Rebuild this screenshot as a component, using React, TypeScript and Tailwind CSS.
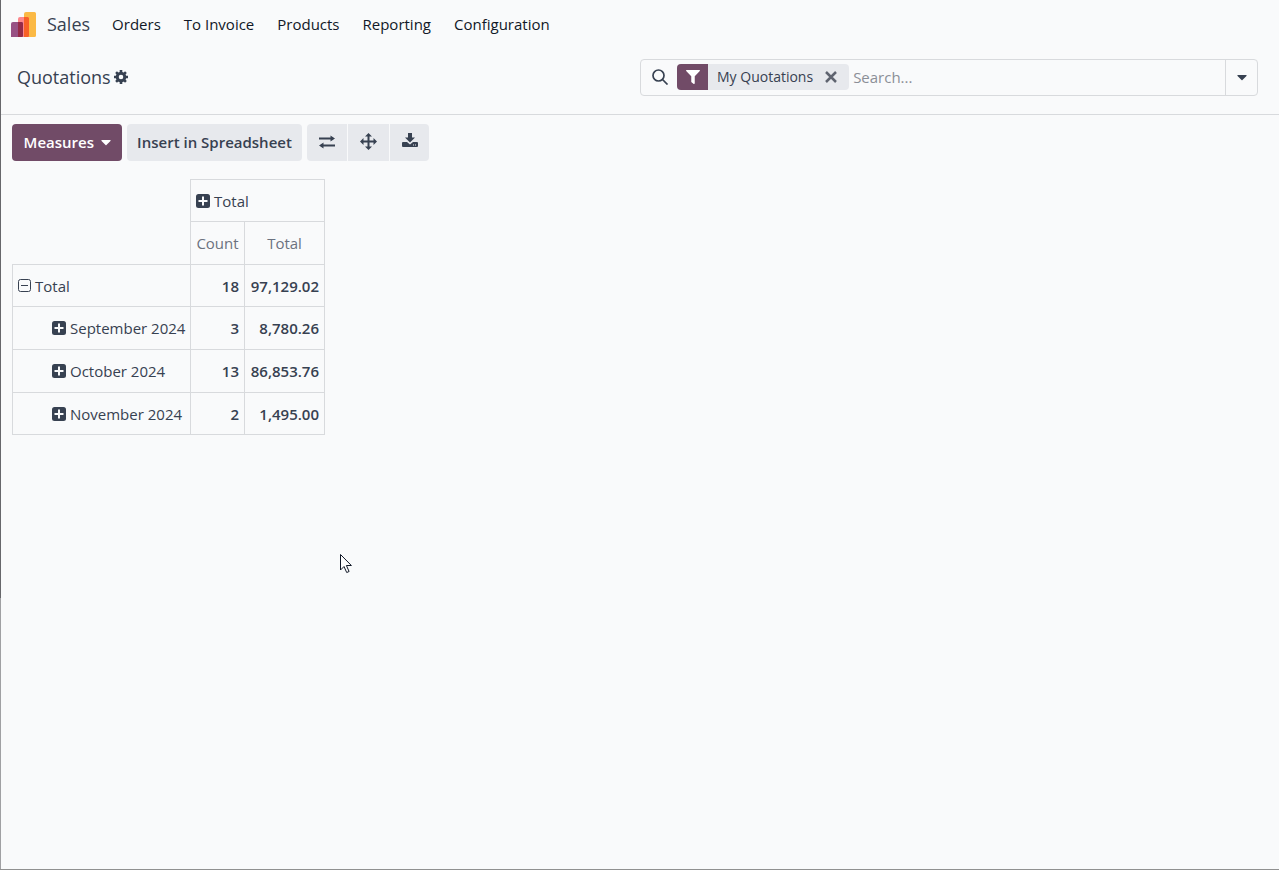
import { useState } from "react";
import { FaCaretDown, FaFilter } from "react-icons/fa";

const menuItems = ["Orders", "To Invoice", "Products", "Reporting", "Configuration"];

const rows = [
  { label: "Total", count: "18", total: "97,129.02", open: true },
  { label: "September 2024", count: "3", total: "8,780.26" },
  { label: "October 2024", count: "13", total: "86,853.76" },
  { label: "November 2024", count: "2", total: "1,495.00" },
];

const cell = "border border-[#d8dadd] px-[5px]";

const cogTeeth = [0, 45, 90, 135];

function SalesLogo() {
  return (
    <svg width="25" height="25" viewBox="0 0 25 25" aria-hidden="true">
      <path d="M15 0h8.500a1.500 1.500 0 0 1 1.500 1.500v22a1.500 1.500 0 0 1-1.500 1.500H13V2a2 2 0 0 1 2-2Z" fill="#fbb945" />
      <path d="M9 5h7.500A1.500 1.500 0 0 1 18 6.500V23.500a1.500 1.500 0 0 1-1.500 1.500H7V7a2 2 0 0 1 2-2Z" fill="#fc868b" />
      <path d="M2 10h8.500a1.500 1.500 0 0 1 1.500 1.500V23.500a1.500 1.500 0 0 1-1.500 1.500H0V12a2 2 0 0 1 2-2Z" fill="#985184" />
      <path d="M13 5h3.500A1.500 1.500 0 0 1 18 6.500V23.500a1.500 1.500 0 0 1-1.500 1.500H13V5Z" fill="#f86126" />
      <path d="M7 10h3.500a1.500 1.500 0 0 1 1.500 1.500V23.500a1.500 1.500 0 0 1-1.500 1.500H7V10Z" fill="#962b48" />
    </svg>
  );
}

function CogIcon() {
  return (
    <svg width="14" height="14" viewBox="0 0 14 14" stroke="currentColor" fill="none" aria-hidden="true">
      <circle cx="7" cy="7" r="3.800" strokeWidth="3" />
      {cogTeeth.map((angle) => (
        <path key={angle} d="M7 0v2.500M7 11.500V14" strokeWidth="2.600" transform={`rotate(${angle} 7 7)`} />
      ))}
    </svg>
  );
}

function SearchIcon() {
  return (
    <svg width="17" height="16" viewBox="0 0 17 16" stroke="currentColor" fill="none" strokeWidth="1.700" aria-hidden="true">
      <circle cx="6.500" cy="6.500" r="5.500" />
      <path d="m10.500 10.500 5 5" />
    </svg>
  );
}

function PlusIcon() {
  return (
    <svg width="14" height="14" viewBox="0 0 14 14" aria-hidden="true">
      <rect width="14" height="14" rx="2.500" fill="currentColor" />
      <path d="M7 2.500v9M2.500 7h9" stroke="#f9fafb" strokeWidth="2" />
    </svg>
  );
}

function MinusIcon() {
  return (
    <svg width="13" height="13" viewBox="0 0 13 13" fill="none" stroke="currentColor" aria-hidden="true">
      <rect x=".5" y=".5" width="12" height="12" rx="2" />
      <path d="M3 6.500h7" />
    </svg>
  );
}

function ExchangeIcon() {
  return (
    <svg width="18" height="14" viewBox="0 0 18 14" fill="currentColor" aria-hidden="true">
      <path d="M1 2.500h11.500V.500L17 3.500l-4.500 3v-2H1ZM17 9.500H5.500v-2L1 10.500l4.500 3v-2H17Z" />
    </svg>
  );
}

function ExpandIcon() {
  return (
    <svg width="17" height="17" viewBox="0 0 17 17" fill="currentColor" aria-hidden="true">
      <path d="M8.500 0 12 3.500H9.500v4h4V5L17 8.500 13.500 12V9.500h-4v4H12L8.500 17 5 13.500h2.500v-4h-4V12L0 8.500 3.500 5v2.500h4v-4H5Z" />
    </svg>
  );
}

function DownloadIcon() {
  return (
    <svg width="16" height="15" viewBox="0 0 16 15" fill="currentColor" aria-hidden="true">
      <path d="M6 0h4v4.500h3L8 9.500 3 4.500h3Z" />
      <path
        fillRule="evenodd"
        d="M1 9h4l3 2.500L11 9h4a1 1 0 0 1 1 1v3a1 1 0 0 1-1 1H1a1 1 0 0 1-1-1v-3a1 1 0 0 1 1-1Zm10 2.500v1h1v-1Zm2 0v1h1v-1Z"
      />
    </svg>
  );
}

function Cursor() {
  return (
    <svg
      className="pointer-events-none absolute left-[340px] top-[554px]"
      width="13"
      height="20"
      viewBox="0 0 13 20"
      aria-hidden="true"
    >
      <path d="M.5.500v15.500l3.500-3.500 2.700 6 2.400-1-2.700-6h5Z" fill="#fff" stroke="#111827" />
    </svg>
  );
}

export default function App() {
  const [query, setQuery] = useState("");

  return (
    <div className="relative flex min-h-screen border-b border-[#909090] bg-[#f9fafb] font-['Open_Sans','Noto_Sans',sans-serif] text-[15px] leading-6 text-[#374151]">
      <div className="flex w-px flex-col">
        <div className="h-[598px] bg-[#67676b]" />
        <div className="flex-1 bg-[#a0a0a3]" />
      </div>

      <div className="min-w-0 flex-1">
        <header className="flex h-12 items-center pl-[10px]">
          <a href="#" className="flex items-center gap-[11px] text-lg">
            <SalesLogo />
            Sales
          </a>
          <nav className="ml-[22px] flex gap-[23px] text-[#111827]">
            {menuItems.map((item) => (
              <a key={item} href="#">
                {item}
              </a>
            ))}
          </nav>
        </header>

        <div className="grid h-[67px] grid-cols-2 border-b border-[#d8dadd] pt-[11px]">
          <div className="flex h-[37px] items-center gap-[3px] pb-0.5 pl-4">
            <h1 className="text-lg">Quotations</h1>
            <button aria-label="Actions">
              <CogIcon />
            </button>
          </div>
          <div className="pr-[21px]">
            <div className="flex h-[37px] rounded border border-[#d8dadd]">
              <div className="flex flex-1 items-center pb-0.5 pl-[11px]">
                <SearchIcon />
                <div className="ml-2 flex h-[26px] items-center overflow-hidden rounded bg-[#e7e9ed]">
                  <span className="flex h-full w-[31px] items-center justify-center bg-[#714b67] text-white">
                    <FaFilter size={14} />
                  </span>
                  <span className="pl-[9px] text-sm">My Quotations</span>
                  <button aria-label="Remove" className="px-3 text-[#5f6470]">
                    <svg width="12" height="12" viewBox="0 0 12 12" stroke="currentColor" strokeWidth="2.500">
                      <path d="m1 1 10 10M11 1 1 11" />
                    </svg>
                  </button>
                </div>
                <input
                  aria-label="Search"
                  placeholder="Search..."
                  value={query}
                  onChange={(e) => setQuery(e.target.value)}
                  className="ml-1 min-w-0 flex-1 outline-none placeholder:text-[#8b8f97]"
                />
              </div>
              <button aria-label="Toggle search panel" className="flex w-8 items-center justify-center border-l border-[#d8dadd] pb-0.5">
                <FaCaretDown size={16} />
              </button>
            </div>
          </div>
        </div>

        <main className="px-[11px] pt-[9px]">
          <div className="flex h-[37px] gap-[5px] font-semibold">
            <button className="flex w-[110px] items-center justify-end gap-1 rounded bg-[#714b67] pb-0.5 pr-2 text-white">
              Measures
              <FaCaretDown size={16} />
            </button>
            <button className="w-[175px] rounded bg-[#e7e9ed] pb-0.5">Insert in Spreadsheet</button>
            <div className="flex gap-px overflow-hidden rounded">
              <button aria-label="Flip axis" className="flex w-10 items-center justify-center bg-[#e7e9ed] pb-0.5">
                <ExchangeIcon />
              </button>
              <button aria-label="Expand all" className="flex w-[41px] items-center justify-center bg-[#e7e9ed] pb-0.5">
                <ExpandIcon />
              </button>
              <button aria-label="Download xlsx" className="flex w-[39px] items-center justify-center bg-[#e7e9ed] pb-1">
                <DownloadIcon />
              </button>
            </div>
          </div>

          <table className="mt-[18px] w-[313px] table-fixed border-collapse whitespace-nowrap">
            <colgroup>
              <col className="w-[178px]" />
              <col className="w-[54px]" />
              <col className="w-[80px]" />
            </colgroup>
            <thead>
              <tr className="h-[42px]">
                <td rowSpan={2} />
                <th colSpan={2} className={`${cell} text-left font-normal`}>
                  <button className="flex items-center gap-1">
                    <PlusIcon />
                    Total
                  </button>
                </th>
              </tr>
              <tr className="h-[43px] text-[#6b7280]">
                <th className={`${cell} font-normal`}>Count</th>
                <th className={`${cell} font-normal`}>Total</th>
              </tr>
            </thead>
            <tbody>
              {rows.map((row) => (
                <tr key={row.label} className="h-[43px] first:h-[42px] last:h-[42px]">
                  <th className={`${cell} font-normal`}>
                    <button className={`flex items-center gap-1 ${row.open ? "" : "pl-[34px]"}`}>
                      {row.open ? <MinusIcon /> : <PlusIcon />}
                      {row.label}
                    </button>
                  </th>
                  <td className={`${cell} text-right font-semibold`}>{row.count}</td>
                  <td className={`${cell} text-right font-semibold`}>{row.total}</td>
                </tr>
              ))}
            </tbody>
          </table>
        </main>
      </div>

      <Cursor />
    </div>
  );
}
